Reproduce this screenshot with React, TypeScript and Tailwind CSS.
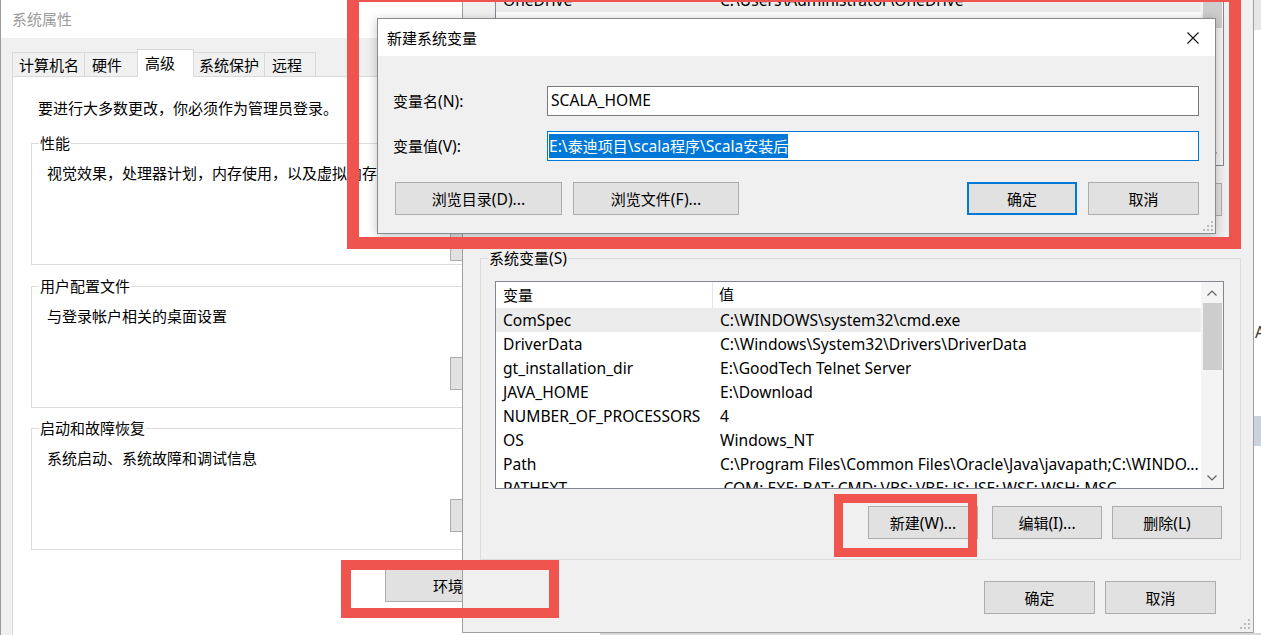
import React from "react";

const CJK = /([\u2e80-\u9fff\u3000-\u303f\uff00-\uffef]+)/;
const CJK1 = /[\u2e80-\u9fff\u3000-\u303f\uff00-\uffef]/;

function M({ t }: { t: string }) {
  const parts = t.split(CJK);
  return (
    <>
      {parts.map((p, i) =>
        p === "" ? null : CJK1.test(p) ? (
          <span key={i} className="text-[15px]">
            {p}
          </span>
        ) : (
          <span key={i}>{p}</span>
        )
      )}
    </>
  );
}

function Btn({ label, className, def }: { label: string; className: string; def?: boolean }) {
  return (
    <div
      className={
        "flex h-[33px] shrink-0 items-center justify-center bg-[#e1e1e1] leading-[20px] text-black " +
        (def ? "border-2 border-[#0078d7] " : "border border-[#adadad] ") +
        className
      }
    >
      <M t={label} />
    </div>
  );
}

function Grip() {
  return (
    <svg width="12" height="12" viewBox="0 0 12 12">
      <rect x="9" y="1" width="2" height="2" fill="#bdbdbd" />
      <rect x="5" y="5" width="2" height="2" fill="#bdbdbd" />
      <rect x="9" y="5" width="2" height="2" fill="#bdbdbd" />
      <rect x="1" y="9" width="2" height="2" fill="#bdbdbd" />
      <rect x="5" y="9" width="2" height="2" fill="#bdbdbd" />
      <rect x="9" y="9" width="2" height="2" fill="#bdbdbd" />
    </svg>
  );
}

function Chevron({ up }: { up?: boolean }) {
  return (
    <svg width="10" height="6" viewBox="0 0 10 6">
      <polyline
        points={up ? "0.5,5.5 5,1 9.5,5.5" : "0.5,0.5 5,5 9.5,0.5"}
        fill="none"
        stroke="#606060"
        strokeWidth="1.2"
      />
    </svg>
  );
}

const sysVars: [string, string][] = [
  ["ComSpec", "C:\\WINDOWS\\system32\\cmd.exe"],
  ["DriverData", "C:\\Windows\\System32\\Drivers\\DriverData"],
  ["gt_installation_dir", "E:\\GoodTech Telnet Server"],
  ["JAVA_HOME", "E:\\Download"],
  ["NUMBER_OF_PROCESSORS", "4"],
  ["OS", "Windows_NT"],
  ["Path", "C:\\Program Files\\Common Files\\Oracle\\Java\\javapath;C:\\WINDO..."],
  ["PATHEXT", ".COM;.EXE;.BAT;.CMD;.VBS;.VBE;.JS;.JSE;.WSF;.WSH;.MSC"],
];

const userVars: [string, string][] = [
  ["IntelliJ IDEA Community Edition", "E:\\IntelliJ IDEA\\bin;"],
  ["MOZ_PLUGIN_PATH", "C:\\Program Files (x86)\\Foxit Software\\plugins\\"],
  ["OneDrive", "C:\\Users\\Administrator\\OneDrive"],
  ["OneDriveConsumer", "C:\\Users\\Administrator\\OneDrive"],
  ["Path", "C:\\Users\\Administrator\\AppData\\Local\\Microsoft\\WindowsApps;"],
  ["TEMP", "C:\\Users\\Administrator\\AppData\\Local\\Temp"],
  ["TMP", "C:\\Users\\Administrator\\AppData\\Local\\Temp"],
];

function VarList({ rows, hi, header, className }: { rows: [string, string][]; hi: number; header?: boolean; className: string }) {
  return (
    <div className={"flex shrink-0 border border-[#828790] bg-white " + className}>
      <div className="flex min-w-0 flex-1 flex-col overflow-hidden">
        {header && (
          <div className="flex h-[26px] shrink-0 items-center">
            <div className="flex h-full w-[217px] shrink-0 items-center border-r border-[#e5e5e5] pl-[7px]">
              <M t="变量" />
            </div>
            <div className="pl-[6px]">
              <M t="值" />
            </div>
          </div>
        )}
        {rows.map(([k, v], i) => (
          <div
            key={k + i}
            className={"flex h-[24px] shrink-0 items-center whitespace-nowrap leading-[24px] " + (i === hi ? "bg-[#ececec]" : "")}
          >
            <div className="w-[217px] shrink-0 overflow-hidden pl-[7px]">{k}</div>
            <div className="overflow-hidden pl-[7px]">{v}</div>
          </div>
        ))}
      </div>
      <div className="flex w-[22px] shrink-0 flex-col bg-[#f4f4f4]">
        <div className="flex h-[21px] items-center justify-center">
          <Chevron up />
        </div>
        <div className="mx-auto h-[67px] w-[19px] bg-[#cdcdcd]" />
        <div className="flex-1" />
        <div className="flex h-[21px] items-center justify-center">
          <Chevron />
        </div>
      </div>
    </div>
  );
}

function Group({ label, text, btnTop, className }: { label: string; text: string; btnTop: string; className: string }) {
  return (
    <fieldset className={"ml-[18px] h-[132px] w-[560px] shrink-0 border border-[#dcdcdc] " + className}>
      <legend className="ml-[7px] px-[1px] leading-[20px]">
        <M t={label} />
      </legend>
      <div className="flex flex-col">
        <div className="ml-[15px] mt-[10px] leading-[20px]">
          <M t={text} />
        </div>
        <Btn label="设置(S)..." className={"ml-[418px] w-[110px] " + btnTop} />
      </div>
    </fieldset>
  );
}

export default function App() {
  return (
    <div className="relative h-[635px] w-[1261px] overflow-hidden bg-[#d8d8d8] font-['Noto_Sans','Noto_Sans_CJK_SC',sans-serif] text-[15.6px] text-black">
      {/* System Properties window */}
      <div className="absolute left-0 top-0 flex h-[635px] w-[600px] flex-col border-l border-[#9a9a9a] bg-[#f0f0f0]">
        <div className="flex h-[38px] shrink-0 items-center bg-white pl-[11px] text-[#9b9b9b]">
          <M t="系统属性" />
        </div>
        <div className="flex h-[38px] shrink-0 items-end pl-[11px] leading-[20px]">
          <div className="flex h-[24px] w-[72px] items-center border-l border-t border-[#d9d9d9] pl-[6px]">
            <M t="计算机名" />
          </div>
          <div className="flex h-[24px] w-[53px] items-center border-l border-t border-[#d9d9d9] pl-[7px]">
            <M t="硬件" />
          </div>
          <div className="relative z-10 -mb-px flex h-[28px] w-[57px] items-start border-l border-r border-t border-[#d9d9d9] bg-white pl-[7px] pt-[3px]">
            <M t="高级" />
          </div>
          <div className="flex h-[24px] w-[70px] items-center border-t border-[#d9d9d9] pl-[5px]">
            <M t="系统保护" />
          </div>
          <div className="flex h-[24px] w-[52px] items-center border-l border-r border-t border-[#d9d9d9] pl-[7px]">
            <M t="远程" />
          </div>
        </div>
        <div className="ml-[11px] flex flex-1 flex-col border-l border-t border-[#d9d9d9] bg-white">
          <div className="ml-[25px] mt-[21px] leading-[20px]">
            <M t="要进行大多数更改，你必须作为管理员登录。" />
          </div>
          <Group label="性能" text="视觉效果，处理器计划，内存使用，以及虚拟内存" btnTop="mt-[45px]" className="mt-[15px]" />
          <Group label="用户配置文件" text="与登录帐户相关的桌面设置" btnTop="mt-[31px]" className="mt-[11px]" />
          <Group label="启动和故障恢复" text="系统启动、系统故障和调试信息" btnTop="mt-[31px]" className="mt-[10px]" />
          <Btn label="环境变量(N)..." className="ml-[372px] mt-[19px] w-[190px]" />
        </div>
      </div>

      {/* Environment Variables window */}
      <div className="absolute left-[462px] top-0 flex h-[633px] w-[792px] flex-col border-b border-l border-r border-[#a0a0a0] bg-[#f0f0f0]">
        <VarList rows={userVars} hi={2} className="-mt-[61px] ml-[32px] h-[227px] w-[729px]" />
        <div className="ml-[32px] mt-[17px] flex w-[729px] justify-end gap-[10px] pr-[2px]">
          <Btn label="新建(N)..." className="w-[110px]" />
          <Btn label="编辑(E)..." className="w-[110px]" />
          <Btn label="删除(D)" className="w-[110px]" />
        </div>
        <fieldset className="ml-[17px] mt-[32px] h-[312px] w-[761px] shrink-0 border border-[#dcdcdc]">
          <legend className="ml-[7px] px-[1px] leading-[20px]">
            <M t="系统变量(S)" />
          </legend>
          <div className="flex flex-col">
            <VarList rows={sysVars} hi={0} header className="ml-[14px] mt-[13px] h-[208px] w-[729px]" />
            <div className="ml-[14px] mt-[17px] flex w-[729px] justify-end pr-[2px]">
              <Btn label="新建(W)..." className="w-[110px]" />
              <Btn label="编辑(I)..." className="ml-[14px] w-[110px]" />
              <Btn label="删除(L)" className="ml-[10px] w-[110px]" />
            </div>
          </div>
        </fieldset>
        <div className="mt-[21px] flex justify-end gap-[10px] pr-[37px]">
          <Btn label="确定" className="w-[111px]" />
          <Btn label="取消" className="w-[111px]" />
        </div>
        <div className="absolute bottom-[2px] right-[2px]">
          <Grip />
        </div>
      </div>

      {/* another window behind, at the right edge */}
      <div className="absolute left-[1254px] top-0 flex h-[633px] w-[20px] flex-col bg-white">
        <div className="h-[30px] bg-[#e6e6e6]" />
        <div className="ml-[1px] mt-[292px] leading-[20px] text-[#333]">A</div>
        <div className="mt-[74px] h-[30px] bg-[#c9d2de]" />
      </div>

      {/* New System Variable dialog */}
      <div className="absolute left-[377px] top-[18px] flex h-[216px] w-[839px] flex-col border border-[#8a8a8a] bg-[#f0f0f0] shadow-[0_2px_10px_rgba(0,0,0,0.25)]">
        <div className="flex h-[37px] shrink-0 items-center justify-between bg-white pl-[9px] pr-[16px] leading-[20px]">
          <M t="新建系统变量" />
          <svg width="12" height="12" viewBox="0 0 12 12">
            <path d="M0.5 0.5 L11.5 11.5 M11.5 0.5 L0.5 11.5" stroke="#111" strokeWidth="1.1" />
          </svg>
        </div>
        <div className="mt-[30px] flex h-[30px] items-center">
          <div className="w-[169px] shrink-0 pl-[15px] leading-[20px]">
            <M t="变量名(N):" />
          </div>
          <div className="flex h-[30px] w-[652px] items-center border border-[#7a7a7a] bg-white pl-[3px]">SCALA_HOME</div>
        </div>
        <div className="mt-[15px] flex h-[30px] items-center">
          <div className="w-[169px] shrink-0 pl-[15px] leading-[20px]">
            <M t="变量值(V):" />
          </div>
          <div className="flex h-[30px] w-[652px] items-center border border-[#0078d7] bg-white pl-[1px]">
            <span className="bg-[#0078d7] leading-[24px] text-white">
              <M t="E:\泰迪项目\scala程序\Scala安装后" />
            </span>
          </div>
        </div>
        <div className="mt-[21px] flex pl-[17px] pr-[16px]">
          <Btn label="浏览目录(D)..." className="w-[167px]" />
          <Btn label="浏览文件(F)..." className="ml-[11px] w-[166px]" />
          <div className="flex-1" />
          <Btn label="确定" def className="w-[110px]" />
          <Btn label="取消" className="ml-[11px] w-[111px]" />
        </div>
        <div className="absolute bottom-[1px] right-[1px]">
          <Grip />
        </div>
      </div>

      {/* red annotation boxes */}
      <div className="pointer-events-none absolute left-[347px] top-[-10px] h-[259px] w-[894px] border-[12px] border-[#f0544f]" />
      <div className="pointer-events-none absolute left-[834px] top-[494px] h-[63px] w-[143px] border-[9px] border-[#f0544f]" />
      <div className="pointer-events-none absolute left-[341px] top-[560px] h-[58px] w-[218px] border-[10px] border-[#f0544f]" />
    </div>
  );
}
